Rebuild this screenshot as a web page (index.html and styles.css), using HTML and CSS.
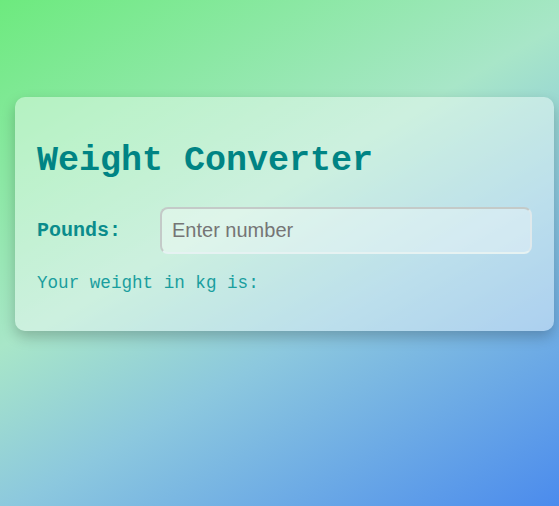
FILE: index.html
```html
<!DOCTYPE html>
<html lang="en">
<head>
<meta charset="utf-8">
<title>Weight Converter</title>
<link rel="stylesheet" href="styles.css">
</head>
<body>
<div class="page">
  <div class="card">
    <h1 class="title">Weight Converter</h1>
    <div class="row">
      <label class="label" for="lbs">Pounds:</label>
      <input class="input" id="lbs" type="number" placeholder="Enter number">
    </div>
    <p class="result">Your weight in kg is:</p>
  </div>
</div>
</body>
</html>
```
FILE: styles.css
```css
html, body {
  margin: 0;
  padding: 0;
  height: 100%;
}
body {
  background: linear-gradient(150deg, #6dea7e 0%, #a8e6c8 42%, #8cc8de 62%, #4b8bed 100%);
  font-family: "Liberation Mono", "Courier New", monospace;
}
.page {
  padding: 97px 5px 0 15px;
}
.card {
  background: rgba(255, 255, 255, 0.42);
  border-radius: 10px;
  box-shadow: 0 6px 14px rgba(0, 0, 0, 0.22);
  padding: 44px 22px 38px 22px;
}
.title {
  margin: 0 0 26px 0;
  font-size: 35px;
  line-height: 40px;
  font-weight: bold;
  color: #008484;
}
.row {
  display: flex;
  align-items: center;
}
.label {
  width: 123px;
  flex: none;
  font-size: 20px;
  font-weight: bold;
  color: #0a8c8c;
}
.input {
  flex: 1;
  min-width: 0;
  box-sizing: border-box;
  height: 47px;
  padding: 10px;
  font-family: "Liberation Sans", Arial, sans-serif;
  font-size: 20px;
  border: 2px solid;
  border-color: #c4cac8 #dfe9ec #e6f2f2 #c4cac8;
  border-radius: 8px;
  background: rgba(255, 255, 255, 0.35);
  color: #333;
  outline: none;
}
.input::placeholder {
  color: #757575;
}
.result {
  margin: 19px 0 0 0;
  font-size: 17.6px;
  line-height: 20px;
  color: #1a9e9e;
}
```
